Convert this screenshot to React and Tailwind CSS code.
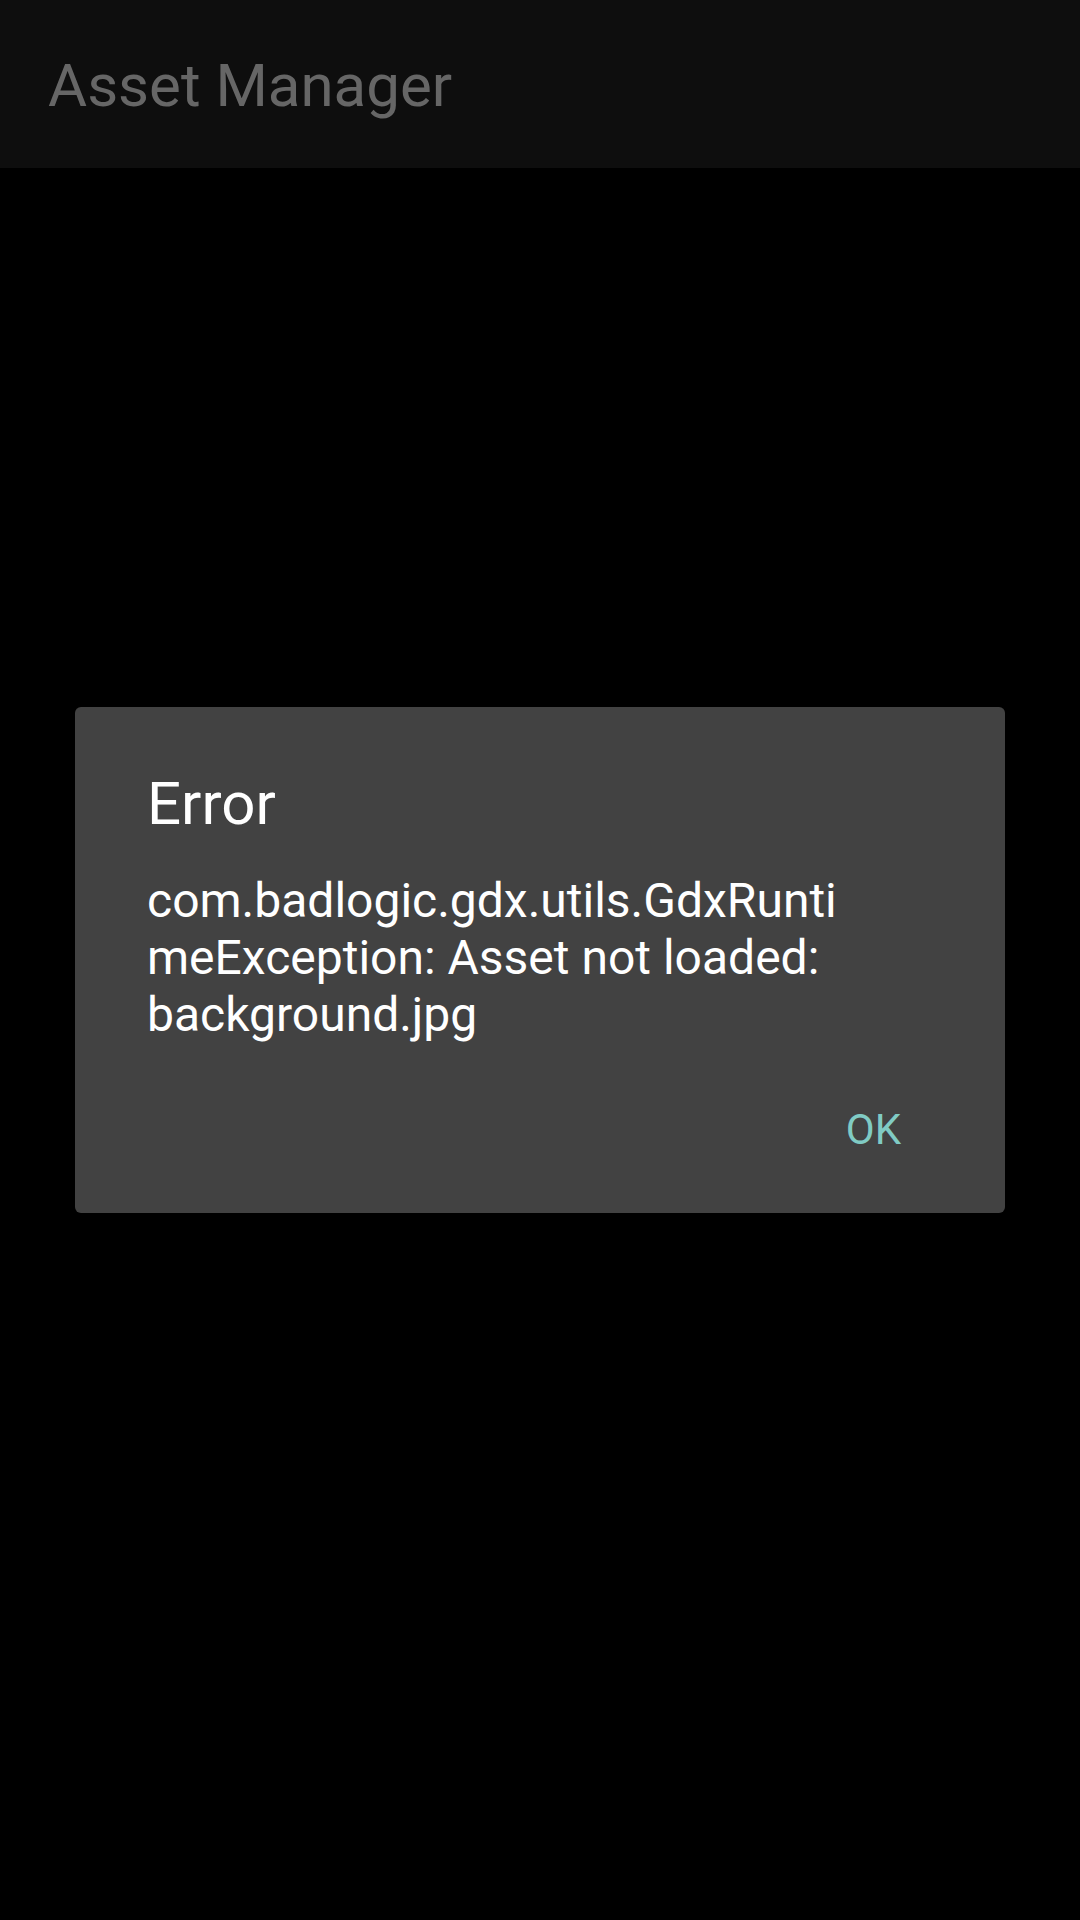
export default function App() {
  return (
    <div className="relative h-[1920px] w-[1080px] overflow-hidden bg-black font-['Roboto',sans-serif]">
      {/* app bar */}
      <div className="flex h-[168px] items-center bg-[#0e0e0e] pl-[48px]">
        <h1 className="pt-[4px] text-[60px] leading-none text-[#666666]">Asset Manager</h1>
      </div>

      {/* error dialog */}
      <div className="absolute inset-0 flex items-center justify-center">
        <div className="flex h-[506px] w-[930px] flex-col rounded-[6px] bg-[#424242]">
          <div className="px-[72px] pt-[62px]">
            <h2 className="text-[60px] leading-[70px] text-white">Error</h2>
            <p className="mt-[33px] text-[48px] leading-[57px] text-white">
              com.badlogic.gdx.utils.GdxRunti
              <br />
              meException: Asset not loaded:
              <br />
              background.jpg
            </p>
          </div>
          <div className="mt-auto flex justify-end pb-[59px] pr-[104px]">
            <button className="text-[42px] leading-[49px] text-[#80cbc4]">OK</button>
          </div>
        </div>
      </div>
    </div>
  );
}
